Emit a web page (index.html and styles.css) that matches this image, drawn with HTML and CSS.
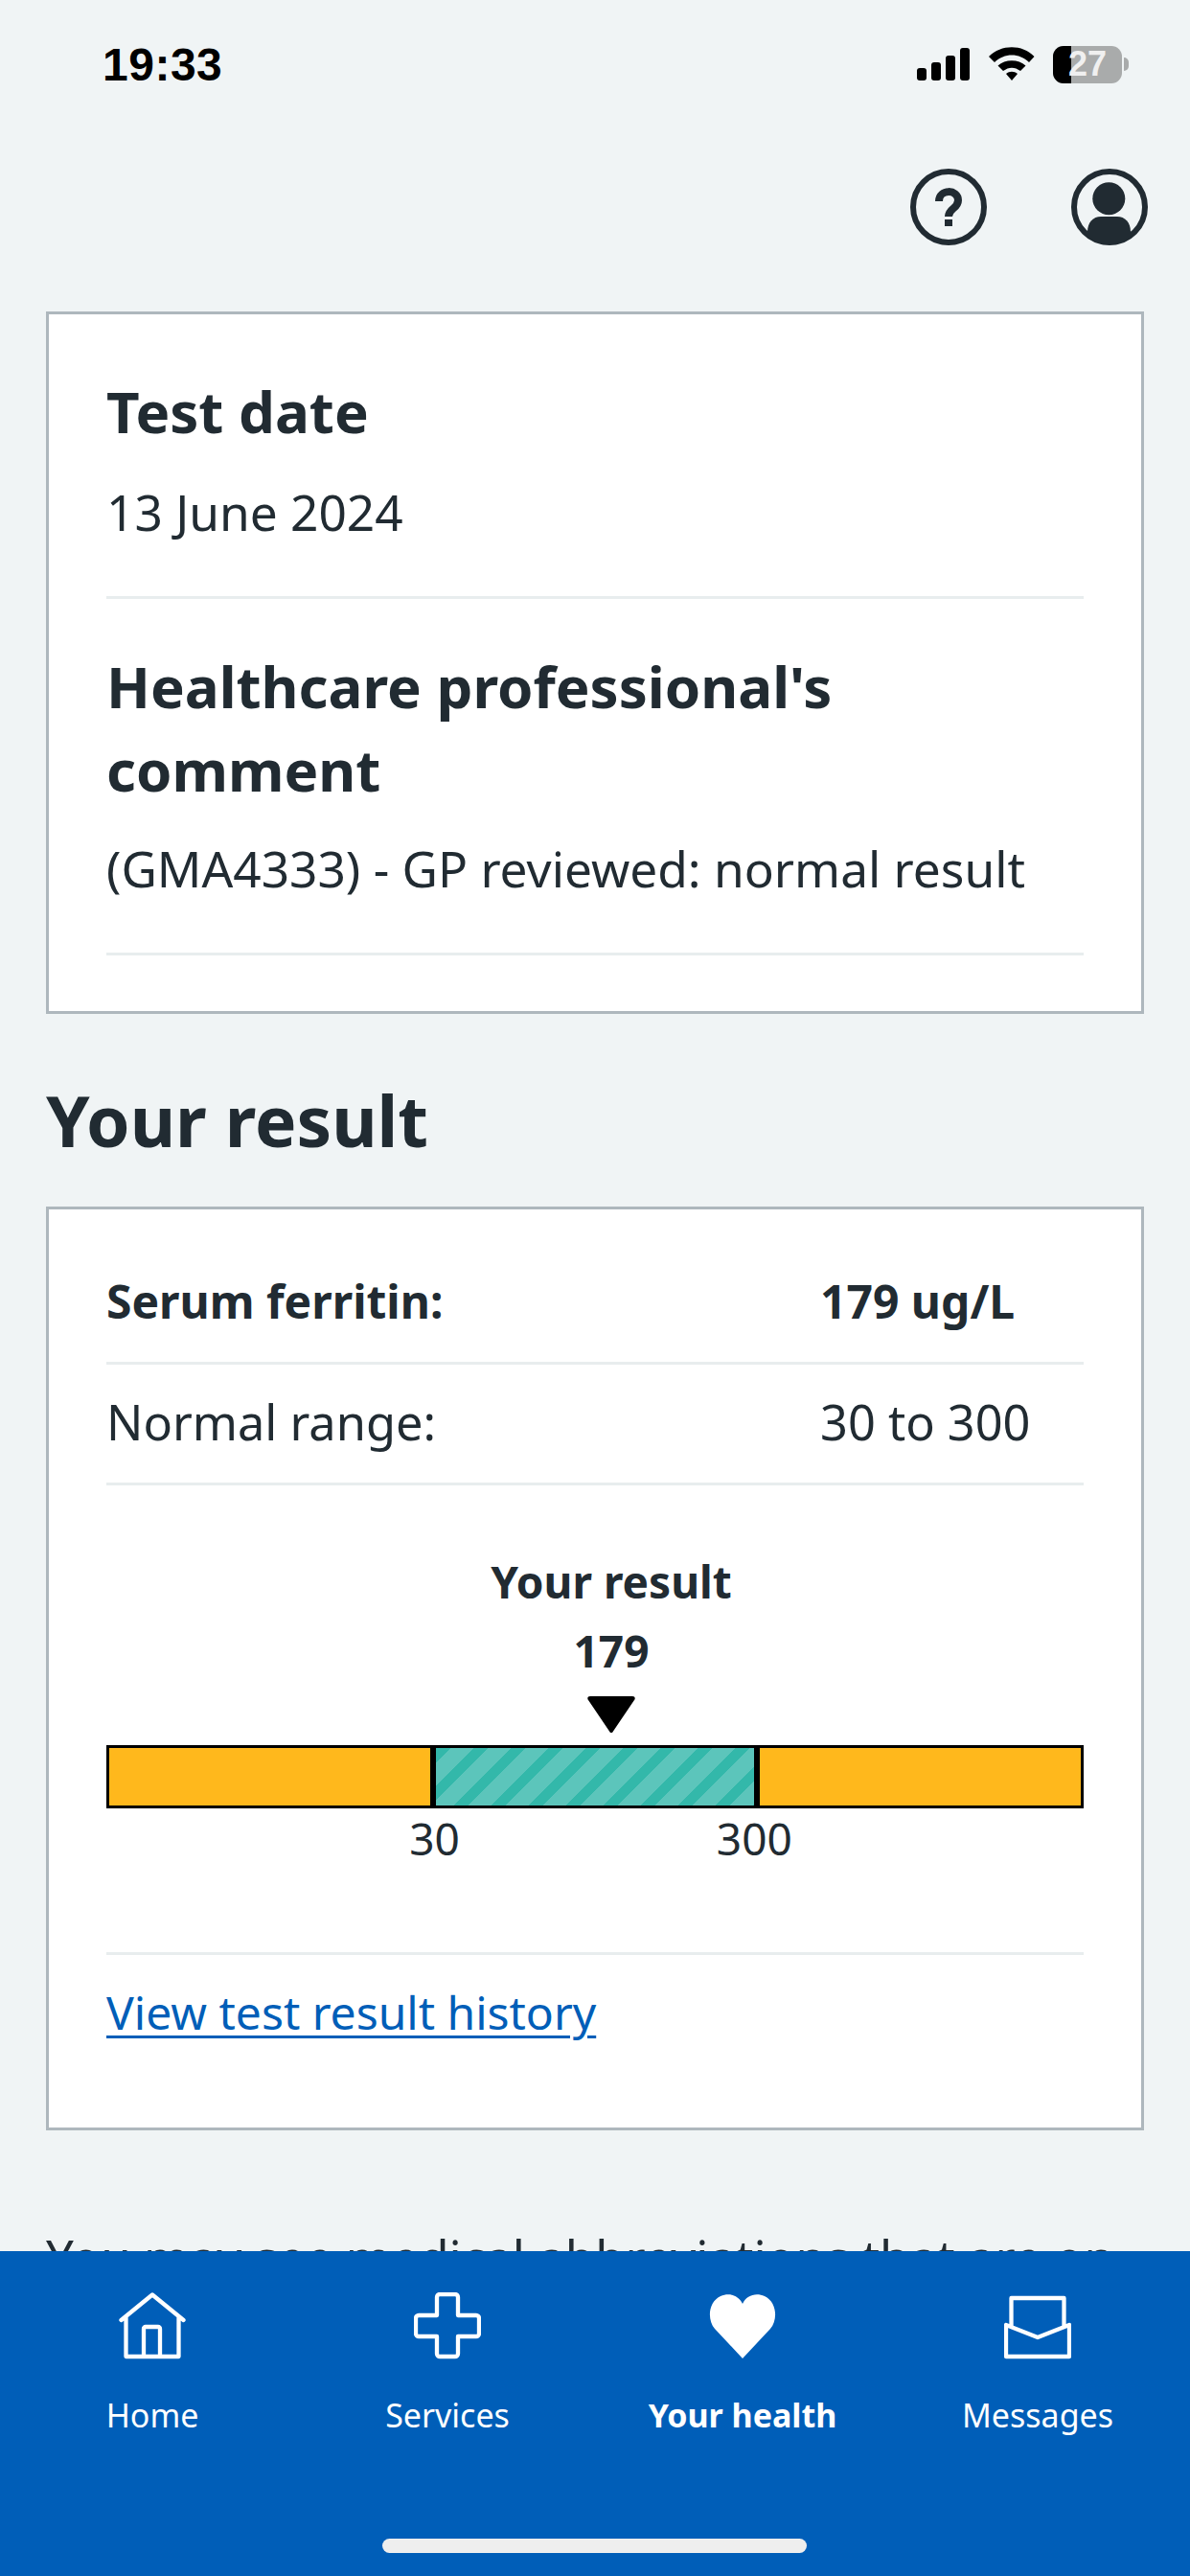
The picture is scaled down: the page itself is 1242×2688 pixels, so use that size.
FILE: index.html
```html
<!DOCTYPE html>
<html lang="en">
<head>
<meta charset="utf-8">
<title>Your result</title>
<link rel="stylesheet" href="styles.css">
</head>
<body>
<div class="screen">
  <header class="status">
    <span class="time">19:33</span>
    <div class="status-icons">
      <svg class="signal" width="56" height="36" viewBox="0 0 56 36"><rect x="0" y="22" width="10" height="13" rx="3"/><rect x="15" y="16" width="10" height="19" rx="3"/><rect x="30" y="9" width="10" height="26" rx="3"/><rect x="45" y="1" width="10" height="34" rx="3"/></svg>
      <svg class="wifi" width="48" height="36" viewBox="0 0 48 36"><path d="M0 10C13-3 35-3 47.500 10L42 16C32 6 16 6 6 16Z"/><path d="M9.500 19.500C17 12.500 31 12.500 38.500 19.500L33 25C27 20.500 21 20.500 15 25Z"/><path d="M18 28C21.500 25 26.500 25 30 28L24 35Z"/></svg>
      <div class="battery"><div class="battery-level"></div><span class="battery-text">27</span></div>
      <div class="battery-cap"></div>
    </div>
  </header>
  <nav class="toolbar">
    <svg width="80" height="80" viewBox="0 0 80 80" class="tool"><circle cx="40" cy="40" r="37" fill="none" stroke="#212b32" stroke-width="6"/><path d="M30 34C30 21 50 21 50 33C50 42 40 41 40 50" fill="none" stroke="#212b32" stroke-width="8"/><rect x="36" y="53" width="8" height="7" fill="#212b32"/></svg>
    <svg width="80" height="80" viewBox="0 0 80 80" class="tool"><defs><clipPath id="c"><circle cx="40" cy="40" r="39"/></clipPath></defs><circle cx="40" cy="40" r="37" fill="none" stroke="#212b32" stroke-width="6"/><circle cx="39.300" cy="31.300" r="17" fill="#212b32"/><path clip-path="url(#c)" d="M17 66C17 56 23 50 31 50H48C56 50 62 56 62 66V80H17Z" fill="#212b32"/></svg>
  </nav>
  <main class="content">
    <section class="card">
      <h3 class="label">Test date</h3>
      <p class="value">13 June 2024</p>
      <hr class="rule">
      <h3 class="label label-next">Healthcare professional's comment</h3>
      <p class="value value-tight">(GMA4333) - GP reviewed: normal result</p>
      <hr class="rule">
    </section>
    <h2 class="section-title">Your result</h2>
    <section class="card card-result">
      <div class="row row-strong"><span>Serum ferritin:</span><span class="row-val">179 ug/L</span></div>
      <div class="row"><span>Normal range:</span><span class="row-val">30 to 300</span></div>
      <div class="chart">
        <div class="chart-head">
          <div class="chart-title">Your result</div>
          <div class="chart-num">179</div>
          <svg class="marker" width="50" height="38" viewBox="0 0 50 38"><path d="M3 0H47C49.500 0 50.500 2 49 4L27 36.500C26 38.500 24 38.500 23 36.500L1 4C-0.500 2 0.500 0 3 0Z"/></svg>
        </div>
        <div class="bar">
          <div class="seg seg-amber"></div>
          <div class="seg seg-normal"></div>
          <div class="seg seg-amber"></div>
        </div>
        <div class="scale"><span class="tick">30</span><span class="tick">300</span></div>
      </div>
      <hr class="rule rule-flush">
      <a class="history" href="#">View test result history</a>
    </section>
    <p class="note">You may see medical abbreviations that are on your record.</p>
  </main>
  <footer class="tabbar">
    <div class="tabs">
      <a class="tab" href="#"><svg width="70" height="70" viewBox="0 0 70 70" class="tab-icon" fill="none" stroke="#fff" stroke-width="4.300" stroke-linejoin="round" stroke-linecap="round"><path d="M2.500 29L35 2.500L67.500 29M7.500 25V67H62.500V25M26 67V38a2 2 0 0 1 2-2H41a2 2 0 0 1 2 2V67"/></svg><span>Home</span></a>
      <a class="tab" href="#"><svg width="70" height="70" viewBox="0 0 70 70" class="tab-icon" fill="none" stroke="#fff" stroke-width="4.300" stroke-linejoin="round"><path d="M27 2H43a3 3 0 0 1 3 3V24H65a3 3 0 0 1 3 3V43a3 3 0 0 1-3 3H46V64a3 3 0 0 1-3 3H27a3 3 0 0 1-3-3V46H5a3 3 0 0 1-3-3V27a3 3 0 0 1 3-3H24V5a3 3 0 0 1 3-3Z"/></svg><span>Services</span></a>
      <a class="tab tab-active" href="#"><svg width="70" height="70" viewBox="0 0 70 70" class="tab-icon" fill="#fff"><path d="M35 69L6 38C-2 29 -1 10 12 4C21 0 31 3 35 12C39 3 49 0 58 4C71 10 72 29 64 38Z"/></svg><span>Your health</span></a>
      <a class="tab" href="#"><svg width="70" height="70" viewBox="0 0 70 70" class="tab-icon" fill="none" stroke="#fff" stroke-width="4.300" stroke-linejoin="round"><path d="M7.500 37V6H62.500V37M2 34V67H68V34L35 47Z"/></svg><span>Messages</span></a>
    </div>
    <div class="home-indicator"></div>
  </footer>
</div>
</body>
</html>
```
FILE: styles.css
```css
* { box-sizing: border-box; }
html, body { margin: 0; padding: 0; }
body { font-family: "Noto Sans", "Open Sans", sans-serif; color: #212b32; background: #f0f4f5; }
.screen { position: relative; width: 1242px; height: 2688px; overflow: hidden; background: #f0f4f5; }

.status { display: flex; justify-content: space-between; align-items: center; height: 134px; padding: 0 64px 0 107px; }
.time { font-family: "Liberation Sans", sans-serif; font-weight: 700; font-size: 48px; letter-spacing: 0.5px; color: #000; }
.status-icons { display: flex; align-items: center; }
.signal { fill: #000; margin-right: 19px; }
.wifi { fill: #000; margin-right: 19px; }
.battery { position: relative; width: 72px; height: 39px; background: #a9abab; border-radius: 11px; overflow: hidden; display: flex; justify-content: center; align-items: center; }
.battery-level { position: absolute; left: 0; top: 0; bottom: 0; width: 19px; background: #000; }
.battery-text { position: relative; font-family: "Liberation Sans", sans-serif; font-weight: 700; font-size: 36px; color: #f0f0f0; }
.battery-cap { width: 5px; height: 14px; margin-left: 2px; background: #a9abab; border-radius: 0 5px 5px 0; }

.toolbar { display: flex; justify-content: flex-end; gap: 88px; padding: 42px 44px 0 0; height: 191px; }
.tool { display: block; }

.content { padding: 0 48px; }
.card { background: #fff; border: 3px solid #aeb7bd; padding: 58px 60px 0 60px; height: 733px; }
.label { margin: 0; font-size: 60px; line-height: 87px; font-weight: 700; }
.label-next { margin-top: 48px; }
.value { margin: 0; font-size: 51.400px; line-height: 72px; padding-top: 25px; }
.value-tight { padding-top: 23px; }
.rule { border: 0; height: 3px; background: #e8edee; margin: 52px 0 0; }

.section-title { margin: 0; font-size: 73px; line-height: 113px; font-weight: 700; padding: 54px 0 34px; }

.card-result { height: 964px; padding: 36px 60px 0 60px; }
.row { display: flex; font-size: 50.500px; line-height: 72px; height: 126px; padding-top: 24px; border-bottom: 3px solid #e8edee; }
.row-strong { font-weight: 700; font-size: 48px; }
.row-val { margin-left: auto; width: 275px; }

.chart { display: flex; flex-direction: column; padding-top: 67px; height: 487px; }
.chart-head { display: flex; flex-direction: column; align-items: center; padding-left: 34px; }
.chart-title { font-size: 46px; line-height: 66px; font-weight: 700; }
.chart-num { font-size: 46px; line-height: 66px; font-weight: 700; margin-top: 6px; }
.marker { display: block; margin-top: 15px; }
.bar { display: flex; width: 100%; height: 66px; margin-top: 13px; border: 3px solid #000; }
.seg { flex: 1 1 0; }
.seg-amber { background: #ffb81c; }
.seg-normal { flex: 0 0 344px; border-left: 6px solid #000; border-right: 6px solid #000; background: repeating-linear-gradient(135deg, #33b8aa 0 11px, #5cc5bb 11px 27.600px); }
.scale { display: flex; justify-content: center; gap: 268px; width: 100%; font-size: 46px; line-height: 62px; padding-left: 12px; }

.rule-flush { margin-top: 0; }
.history { display: block; margin-top: 24px; font-size: 48px; line-height: 72px; color: #005eb8; text-decoration: underline; text-underline-offset: 6px; text-decoration-thickness: 3px; }

.note { margin: 0; padding-top: 96px; font-size: 51px; line-height: 72px; }

.tabbar { position: absolute; left: 0; right: 0; bottom: 0; height: 339px; background: #005eb8; }
.tabs { display: grid; grid-template-columns: repeat(4, 308px); padding: 43px 0 0 5px; }
.tab { display: flex; flex-direction: column; align-items: center; color: #fff; text-decoration: none; font-size: 34px; line-height: 50px; }
.tab-icon { display: block; margin-bottom: 33px; }
.tab-active { font-weight: 700; }
.home-indicator { position: absolute; left: 399px; bottom: 24px; width: 443px; height: 15px; border-radius: 8px; background: #eeeeee; }
```
